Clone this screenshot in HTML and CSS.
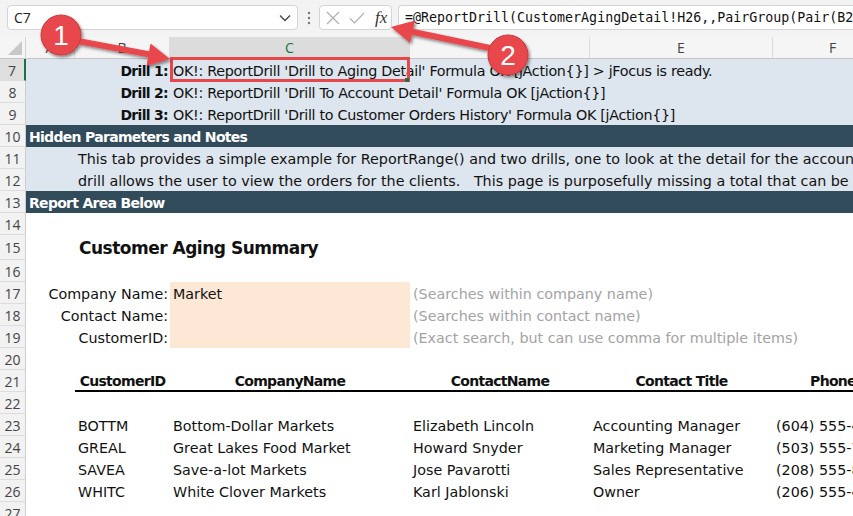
FILE: index.html
```html
<!DOCTYPE html>
<html>
<head>
<meta charset="utf-8">
<link rel="stylesheet" href="styles.css">
</head>
<body>
<div class="app">
  <div class="fbar">
    <div class="namebox">
      <span class="nb-text">C7</span>
      <svg class="chev" width="12" height="8" viewBox="0 0 12 8"><path d="M1 1.5 L6 6.5 L11 1.5" fill="none" stroke="#444" stroke-width="1.3"/></svg>
    </div>
    <svg class="dots" width="4" height="14" viewBox="0 0 4 14"><circle cx="2" cy="2" r="1.2" fill="#777"/><circle cx="2" cy="7" r="1.2" fill="#777"/><circle cx="2" cy="12" r="1.2" fill="#777"/></svg>
    <div class="fxbox">
      <svg width="14" height="14" viewBox="0 0 14 14"><path d="M1 1 L13 13 M13 1 L1 13" stroke="#b0b0b0" stroke-width="1.2" fill="none"/></svg>
      <svg width="16" height="14" viewBox="0 0 16 14"><path d="M1 7.5 L5.5 12 L15 2" stroke="#b0b0b0" stroke-width="1.2" fill="none"/></svg>
      <span class="fx">fx</span>
    </div>
    <div class="formula">=@ReportDrill(CustomerAgingDetail!H26,,PairGroup(Pair(B23,"CustomerID"),Pair(C23,"CompanyName")))</div>
  </div>

  <div class="sheet">
    <div class="r colhead">
      <div class="corner"><svg width="14" height="14" viewBox="0 0 14 14"><path d="M14 0 L14 14 L0 14 Z" fill="#c8c8c8"/></svg></div>
      <div class="ch">A</div><div class="ch">B</div><div class="ch sel">C</div><div class="ch">D</div><div class="ch">E</div><div class="ch">F</div>
    </div>

    <div class="r blue"><div class="rh selrow">7</div><div class="c"></div><div class="c b right">Drill 1:</div><div class="c status">OK!: ReportDrill 'Drill to Aging Detail' Formula OK [jAction{}] &gt; jFocus is ready.</div></div>
    <div class="r blue"><div class="rh">8</div><div class="c"></div><div class="c b right">Drill 2:</div><div class="c status">OK!: ReportDrill 'Drill To Account Detail' Formula OK [jAction{}]</div></div>
    <div class="r blue"><div class="rh">9</div><div class="c"></div><div class="c b right">Drill 3:</div><div class="c status">OK!: ReportDrill 'Drill to Customer Orders History' Formula OK [jAction{}]</div></div>
    <div class="r dark"><div class="rh">10</div><div class="c b">Hidden Parameters and Notes</div></div>
    <div class="r blue"><div class="rh">11</div><div class="c"></div><div class="c">This tab provides a simple example for ReportRange() and two drills, one to look at the detail for the account balance and the second</div></div>
    <div class="r blue"><div class="rh">12</div><div class="c"></div><div class="c pre">drill allows the user to view the orders for the clients.   This page is purposefully missing a total that can be added.</div></div>
    <div class="r dark"><div class="rh">13</div><div class="c b">Report Area Below</div></div>
    <div class="r"><div class="rh">14</div></div>
    <div class="r tall"><div class="rh">15</div><div class="c"></div><div class="c title">Customer Aging Summary</div></div>
    <div class="r"><div class="rh">16</div></div>
    <div class="r"><div class="rh">17</div><div class="c"></div><div class="c right">Company Name:</div><div class="c input">Market</div><div class="c note">(Searches within company name)</div></div>
    <div class="r"><div class="rh">18</div><div class="c"></div><div class="c right">Contact Name:</div><div class="c input"></div><div class="c note">(Searches within contact name)</div></div>
    <div class="r"><div class="rh">19</div><div class="c"></div><div class="c right">CustomerID:</div><div class="c input"></div><div class="c note">(Exact search, but can use comma for multiple items)</div></div>
    <div class="r"><div class="rh">20</div></div>
    <div class="r"><div class="rh">21</div><div class="c"></div><div class="c b th">CustomerID</div><div class="c b th">CompanyName</div><div class="c b th">ContactName</div><div class="c b th">Contact Title</div><div class="c b th">Phone</div></div>
    <div class="r"><div class="rh">22</div></div>
    <div class="r"><div class="rh">23</div><div class="c"></div><div class="c">BOTTM</div><div class="c">Bottom-Dollar Markets</div><div class="c">Elizabeth Lincoln</div><div class="c">Accounting Manager</div><div class="c">(604) 555-4729</div></div>
    <div class="r"><div class="rh">24</div><div class="c"></div><div class="c">GREAL</div><div class="c">Great Lakes Food Market</div><div class="c">Howard Snyder</div><div class="c">Marketing Manager</div><div class="c">(503) 555-7555</div></div>
    <div class="r"><div class="rh">25</div><div class="c"></div><div class="c">SAVEA</div><div class="c">Save-a-lot Markets</div><div class="c">Jose Pavarotti</div><div class="c">Sales Representative</div><div class="c">(208) 555-8097</div></div>
    <div class="r"><div class="rh">26</div><div class="c"></div><div class="c">WHITC</div><div class="c">White Clover Markets</div><div class="c">Karl Jablonski</div><div class="c">Owner</div><div class="c">(206) 555-4112</div></div>
    <div class="r"><div class="rh">27</div></div>
  </div>

  <svg class="annot" width="853" height="516" viewBox="0 0 853 516">
    <defs>
      <filter id="sh" x="-20%" y="-20%" width="140%" height="140%">
        <feDropShadow dx="1.5" dy="2" stdDeviation="1.5" flood-color="#000" flood-opacity="0.45"/>
      </filter>
    </defs>
    <rect x="171.5" y="58.5" width="237" height="22" fill="none" stroke="#e8464b" stroke-width="3"/>
    <rect x="405" y="78" width="4" height="4" fill="#1e7145"/>
    <g filter="url(#sh)">
      <line x1="78" y1="41" x2="150" y2="54.5" stroke="#e8464b" stroke-width="6"/>
      <polygon points="170,59 150.5,43.5 146.5,66" fill="#e8464b"/>
      <line x1="490" y1="48" x2="411" y2="31.5" stroke="#e8464b" stroke-width="6"/>
      <polygon points="391,27 415,20.5 410,43" fill="#e8464b"/>
      <circle cx="61" cy="35" r="20" fill="#e8464b" stroke="#c43a3e" stroke-width="1"/>
      <circle cx="508" cy="55" r="20" fill="#e8464b" stroke="#c43a3e" stroke-width="1"/>
    </g>
    <text x="61" y="45" class="num">1</text>
    <text x="508" y="65" class="num">2</text>
  </svg>
</div>
</body>
</html>
```
FILE: styles.css
```css
* { box-sizing: border-box; }
html, body { margin: 0; padding: 0; background: #ffffff; }
.app {
  position: relative;
  width: 853px;
  height: 516px;
  overflow: hidden;
  font-family: "DejaVu Sans", sans-serif;
}
.fbar {
  height: 37px;
  background: #f3f3f3;
  display: flex;
  align-items: center;
  padding: 0 0 2px 7px;
}
.namebox {
  width: 291px;
  height: 25px;
  background: #fff;
  border: 1px solid #d4d4d4;
  border-radius: 4px;
  display: flex;
  align-items: center;
  justify-content: space-between;
  padding: 0 6px 0 6px;
}
.nb-text { font-family: "Open Sans", sans-serif; font-size: 14px; color: #222; }
.dots { margin: 0 8px 0 9px; }
.fxbox {
  width: 73px;
  height: 25px;
  background: #fff;
  border: 1px solid #d4d4d4;
  border-radius: 4px;
  display: flex;
  align-items: center;
  gap: 9px;
  padding-left: 6px;
}
.fx {
  font-family: "Liberation Serif", serif;
  font-style: italic;
  font-size: 17px;
  color: #333;
  margin-left: 1px;
}
.formula {
  margin-left: 6px;
  flex: 1;
  height: 25px;
  background: #fff;
  border: 1px solid #d4d4d4;
  border-right: none;
  border-radius: 4px 0 0 4px;
  font-family: "DejaVu Sans Mono", monospace;
  font-size: 13.3px;
  color: #111;
  white-space: nowrap;
  overflow: hidden;
  display: flex;
  align-items: center;
  padding-left: 6px;
}
.sheet { width: 853px; overflow: hidden; }
.r {
  display: grid;
  grid-template-columns: 26px 49px 95px 240px 180px 183px 120px;
  height: 22px;
  font-size: 14.3px;
  color: #111;
}
.r.tall { height: 25px; }
.colhead {
  background: #f5f5f5;
  border-bottom: 1px solid #c6c6c6;
}
.corner {
  display: flex;
  align-items: flex-end;
  justify-content: flex-end;
  padding: 0 3px 3px 0;
  border-right: 1px solid #d4d4d4;
}
.ch {
  font-family: "Open Sans", sans-serif;
  font-size: 14px;
  color: #444;
  display: flex;
  align-items: center;
  justify-content: center;
  border-right: 1px solid #dcdcdc;
}
.ch.sel { background: #dcdcdc; color: #1e7145; }
.rh {
  background: #f2f2f2;
  border-right: 1px solid #cfcfcf;
  border-bottom: 1px solid #dcdcdc;
  font-family: "Open Sans", sans-serif;
  font-size: 14px;
  color: #444;
  display: flex;
  align-items: center;
  justify-content: center;
  padding-top: 1px;
}
.rh.selrow { background: #dedede; border-right: 2px solid #1e7145; }
.blue { background: #dde6ee; }
.dark { background: #324b5b; color: #fff; }
.c {
  display: flex;
  align-items: center;
  padding: 1px 3px 0 3px;
  white-space: nowrap;
  min-width: 0;
  overflow: visible;
}
.c.pre { white-space: pre; }
.c.status { letter-spacing: -0.3px; }
.c.right { justify-content: flex-end; padding-right: 2px; }
.b { font-weight: bold; font-size: 14px; letter-spacing: -0.7px; }
.title { font-weight: bold; font-size: 17px; letter-spacing: -0.5px; padding-left: 4px; }
.input { background: #fce8d5; }
.note { color: #a3a3a3; }
.th { justify-content: center; border-bottom: 2px solid #000; }
.annot { position: absolute; left: 0; top: 0; pointer-events: none; }
.num {
  font-family: "Liberation Sans", sans-serif;
  font-size: 28px;
  fill: #fff;
  text-anchor: middle;
}
```
